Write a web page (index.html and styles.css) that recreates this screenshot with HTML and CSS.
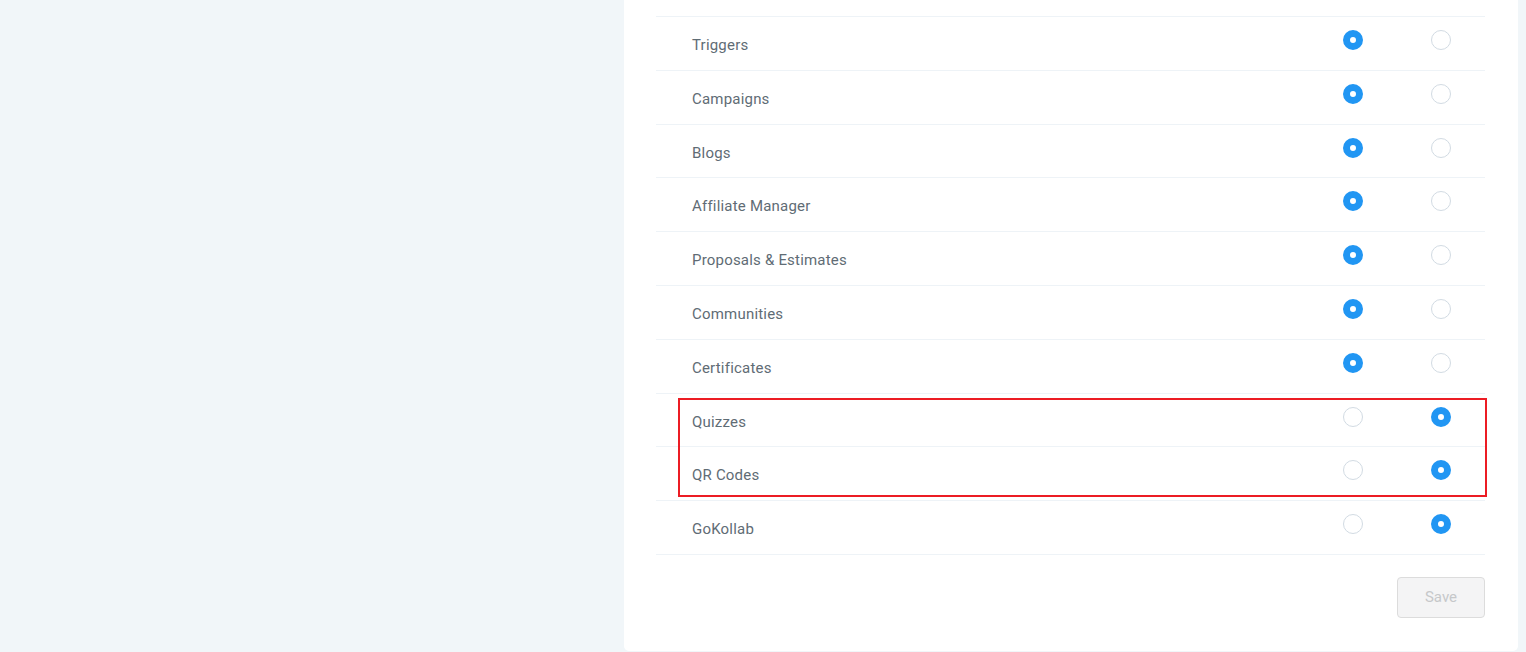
FILE: index.html
```html
<!DOCTYPE html>
<html>
<head>
<meta charset="utf-8">
<link rel="stylesheet" href="styles.css">
</head>
<body>
<div class="page">
  <div class="side"></div>
  <div class="card">
    <div class="list">
      <div class="row"><span class="label">Triggers</span><span class="cell"><span class="radio on"></span></span><span class="cell"><span class="radio"></span></span></div>
      <div class="row"><span class="label">Campaigns</span><span class="cell"><span class="radio on"></span></span><span class="cell"><span class="radio"></span></span></div>
      <div class="row"><span class="label">Blogs</span><span class="cell"><span class="radio on"></span></span><span class="cell"><span class="radio"></span></span></div>
      <div class="row"><span class="label">Affiliate Manager</span><span class="cell"><span class="radio on"></span></span><span class="cell"><span class="radio"></span></span></div>
      <div class="row"><span class="label">Proposals &amp; Estimates</span><span class="cell"><span class="radio on"></span></span><span class="cell"><span class="radio"></span></span></div>
      <div class="row"><span class="label">Communities</span><span class="cell"><span class="radio on"></span></span><span class="cell"><span class="radio"></span></span></div>
      <div class="row"><span class="label">Certificates</span><span class="cell"><span class="radio on"></span></span><span class="cell"><span class="radio"></span></span></div>
      <div class="row"><span class="label">Quizzes</span><span class="cell"><span class="radio"></span></span><span class="cell"><span class="radio on"></span></span></div>
      <div class="row"><span class="label">QR Codes</span><span class="cell"><span class="radio"></span></span><span class="cell"><span class="radio on"></span></span></div>
      <div class="row"><span class="label">GoKollab</span><span class="cell"><span class="radio"></span></span><span class="cell"><span class="radio on"></span></span></div>
    </div>
    <div class="actions"><button class="save" disabled>Save</button></div>
    <div class="highlight"></div>
  </div>
</div>
</body>
</html>
```

FILE: styles.css
```css
html, body {
  margin: 0;
  padding: 0;
  background: #f1f6f9;
  font-family: Roboto, "Liberation Sans", sans-serif;
}
.page {
  display: flex;
  height: 652px;
  overflow: hidden;
}
.side {
  width: 624px;
  flex: none;
}
.card {
  position: relative;
  width: 894px;
  height: 651px;
  background: #fff;
  border-radius: 0 0 5px 5px;
  padding: 16px 33px 0 32px;
  box-sizing: border-box;
}
.list {
  border-top: 1px solid #eef3f7;
}
.row {
  display: flex;
  align-items: flex-start;
  height: 53.8px;
  box-sizing: border-box;
  border-bottom: 1px solid #eef3f7;
}
.label {
  flex: 1;
  padding: 18px 0 0 36px;
  font-size: 15px;
  line-height: 20px;
  letter-spacing: 0.2px;
  color: #5f6c75;
}
.cell {
  width: 88px;
  display: flex;
  justify-content: center;
  padding-top: 13px;
}
.radio {
  width: 20px;
  height: 20px;
  box-sizing: border-box;
  border-radius: 50%;
  border: 1px solid #d2dbe3;
  background: #fff;
}
.radio.on {
  border: 7px solid #2196f3;
}
.actions {
  display: flex;
  justify-content: flex-end;
  padding-top: 22px;
}
.save {
  width: 88px;
  height: 41px;
  border: 1px solid #dcdcdc;
  border-radius: 4px;
  background: #f4f4f5;
  color: #c6c8ca;
  font-family: Roboto, "Liberation Sans", sans-serif;
  font-size: 15px;
  padding: 0;
}
.highlight {
  position: absolute;
  left: 54px;
  top: 398px;
  width: 809px;
  height: 99px;
  box-sizing: border-box;
  border: 2px solid #ec1c24;
}
```
